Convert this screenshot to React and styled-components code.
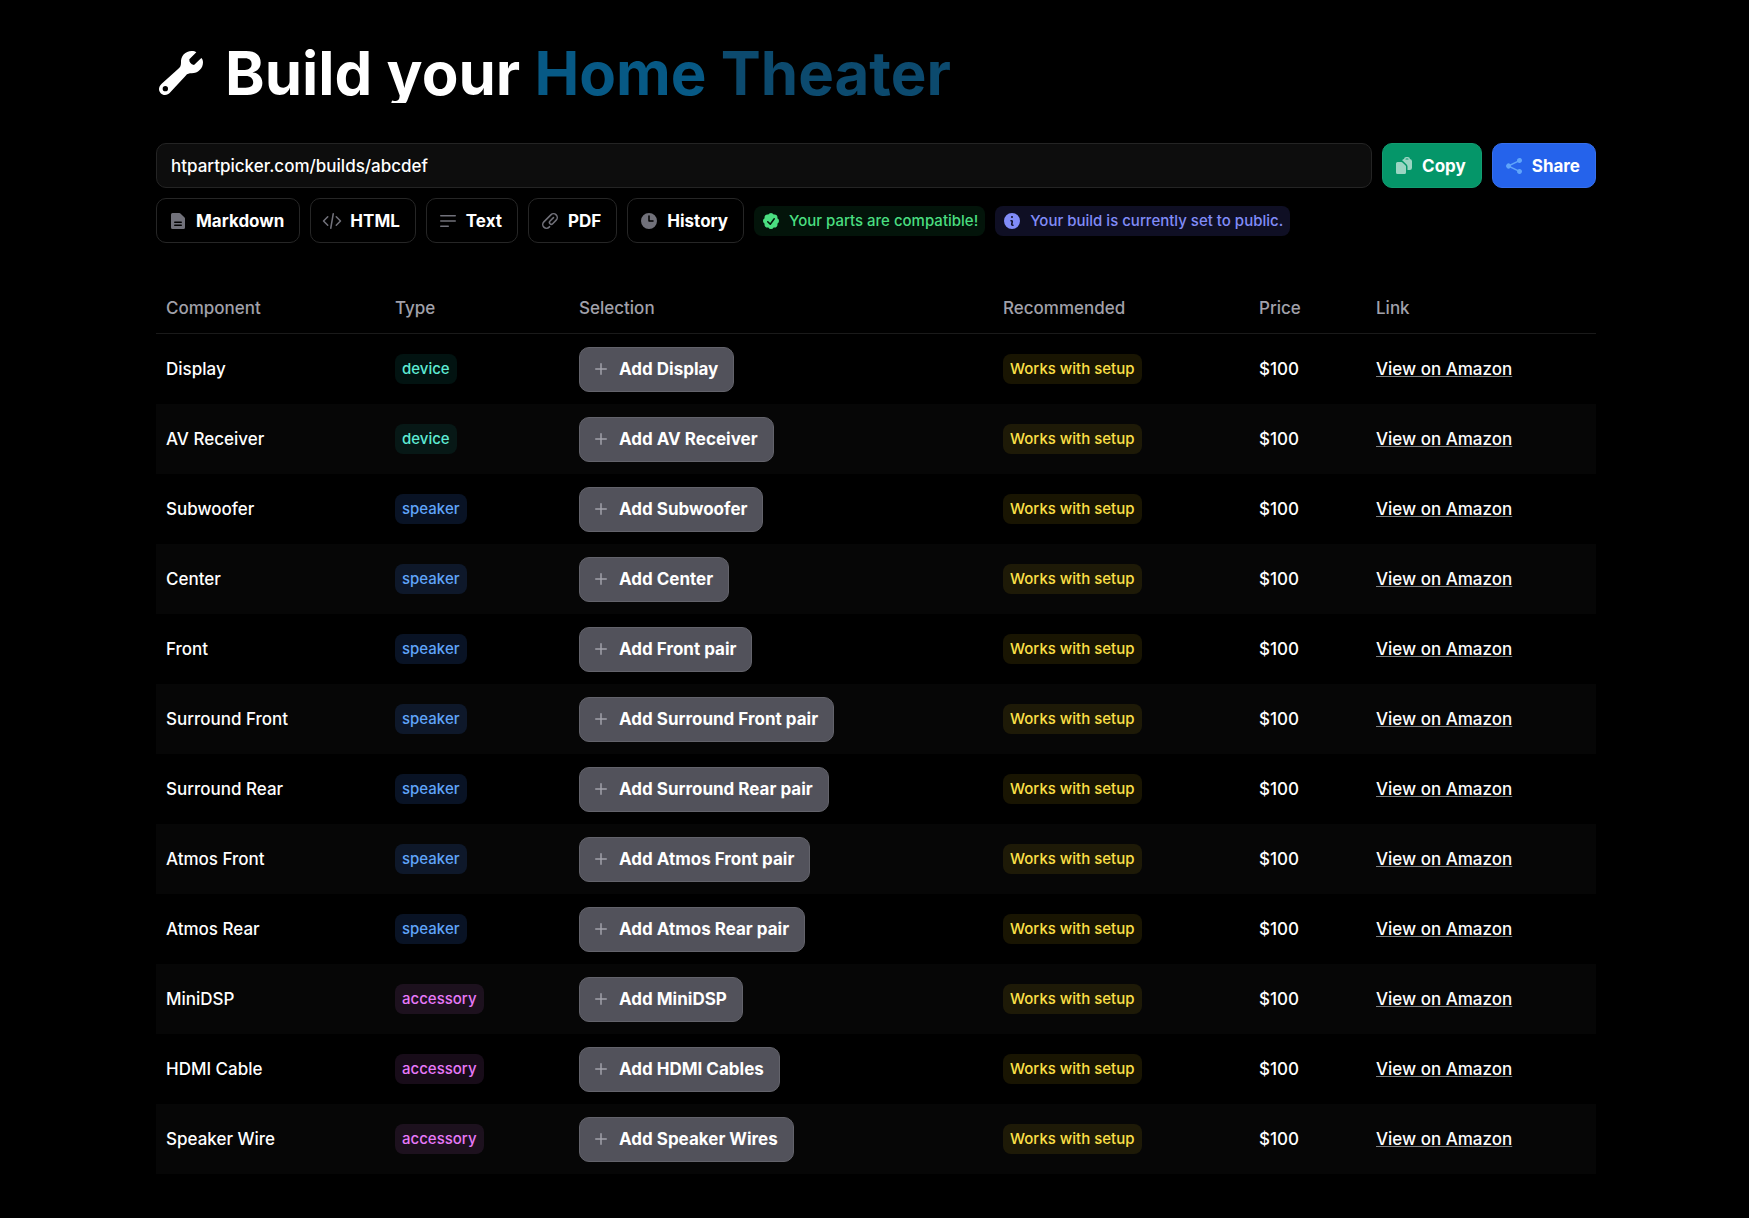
import React from "react";
import styled, { createGlobalStyle, css } from "styled-components";
import {
  HiMiniDocumentText,
  HiMiniCodeBracket,
  HiMiniBars3BottomLeft,
  HiMiniPaperClip,
  HiMiniClock,
  HiMiniCheckBadge,
  HiMiniInformationCircle,
  HiMiniClipboardDocument,
  HiMiniShare,
  HiMiniPlus,
} from "react-icons/hi2";

const GlobalStyle = createGlobalStyle`
  *, *::before, *::after { box-sizing: border-box; }
  body {
    margin: 0;
    background: #000;
    color: #fff;
    font-family: Inter, "Liberation Sans", sans-serif;
    font-size: 17px;
    font-weight: 500;
    line-height: 30px;
  }
  button, input { font: inherit; color: inherit; }
`;

const Page = styled.main`
  display: flex;
  justify-content: center;
  min-height: 100vh;
  padding: 43px 24px 44px 27px;
`;

const Content = styled.div`
  width: 100%;
  max-width: 1440px;
  display: flex;
  flex-direction: column;
  gap: 40px;
`;

const Title = styled.h1`
  display: flex;
  align-items: center;
  gap: 19px;
  margin: 0;
  font-size: 60px;
  line-height: 60px;
  font-weight: 700;

  svg { width: 50px; height: 44px; flex: none; }
`;

const Phrase = styled.span`
  display: inline-block;
  background: ${(p) => p.$color};
  background-clip: text;
  -webkit-background-clip: text;
  color: transparent;
`;

const Toolbar = styled.section`
  display: flex;
  flex-direction: column;
  gap: 10px;
`;

const ToolRow = styled.div`
  display: flex;
  flex-wrap: ${(p) => (p.$wrap ? "wrap" : "nowrap")};
  align-items: center;
  gap: 10px;
`;

const UrlInput = styled.input`
  flex: 1;
  min-width: 0;
  height: 45px;
  padding: 0 14px;
  background: #0d0d0d;
  border: 1px solid #242424;
  border-radius: 10px;
  outline: none;
`;

const tones = {
  outline: css`background: transparent; border-color: #262626; --icon: #71717a;`,
  zinc: css`background: #52525b; border-color: #63636b; --icon: #a1a1aa;`,
  green: css`background: #059669; border-color: #129c71; --icon: #9bd5c3;`,
  blue: css`background: #2563eb; border-color: #366fed; --icon: #60a5fa;`,
};

const Button = styled.button`
  display: inline-flex;
  align-items: center;
  gap: 8px;
  height: 45px;
  padding: 0 15px 0 11px;
  border: 1px solid;
  border-radius: 10px;
  font-weight: 700;
  white-space: nowrap;
  cursor: pointer;
  ${(p) => tones[p.$tone]}

  svg { width: 20px; height: 20px; flex: none; color: var(--icon); }
`;

const badgeTones = {
  device: css`color: #5eead4; background: rgba(20, 184, 166, 0.1);`,
  speaker: css`color: #60a5fa; background: rgba(59, 130, 246, 0.15);`,
  accessory: css`color: #e879f9; background: rgba(232, 121, 249, 0.1);`,
  works: css`color: #fde047; background: rgba(250, 204, 21, 0.1);`,
  green: css`color: #4ade80; background: rgba(34, 197, 94, 0.1);`,
  indigo: css`color: #818cf8; background: rgba(99, 102, 241, 0.15);`,
};

const Badge = styled.span`
  display: inline-flex;
  align-items: center;
  gap: 8px;
  height: 30px;
  padding: 0 7px;
  border-radius: 8px;
  font-size: 15px;
  font-weight: 500;
  white-space: nowrap;
  vertical-align: top;
  ${(p) => badgeTones[p.$tone]}

  svg { width: 20px; height: 20px; }
`;

const Table = styled.table`
  width: 100%;
  table-layout: fixed;
  border-collapse: separate;
  border-spacing: 0;
  text-align: left;
`;

const HeadCell = styled.th`
  height: 51px;
  padding: 0 10px;
  border-bottom: 1px solid #1a1a1a;
  color: #a1a1aa;
  font-weight: 500;
`;

const Row = styled.tr`
  &:nth-child(even) { background: #060606; }
`;

const Cell = styled.td`
  height: 70px;
  padding: 0 10px;
  vertical-align: middle;
  white-space: nowrap;
`;

const StoreLink = styled.a`
  color: #fff;
  text-decoration: underline;
  text-decoration-color: rgba(255, 255, 255, 0.5);
`;

function WrenchIcon() {
  return (
    <svg viewBox="-9 0 150 132" fill="currentColor" aria-hidden="true">
      <path
        fillRule="evenodd"
        d="M98 0 C104 0 109 1 112 4 L91 25 C90 33 95 40 105 42 L127 21 C130 23 132 28 132 34 C132 53 117 67 98 67 C91 67 85 68 80 74 L34 124 C29 130 24 132 18 132 C8 132 0 124 0 114 C0 108 3 103 8 98 L58 53 C64 48 66 43 66 35 C65 15 79 0 98 0 Z M19 105 a8 8 0 1 0 0 16 a8 8 0 1 0 0 -16 Z"
      />
    </svg>
  );
}

const columns = [
  ["Component", 229],
  ["Type", 184],
  ["Selection", 424],
  ["Recommended", 256],
  ["Price", 117],
  ["Link", 230],
];

const parts = [
  ["Display", "device", "Add Display"],
  ["AV Receiver", "device", "Add AV Receiver"],
  ["Subwoofer", "speaker", "Add Subwoofer"],
  ["Center", "speaker", "Add Center"],
  ["Front", "speaker", "Add Front pair"],
  ["Surround Front", "speaker", "Add Surround Front pair"],
  ["Surround Rear", "speaker", "Add Surround Rear pair"],
  ["Atmos Front", "speaker", "Add Atmos Front pair"],
  ["Atmos Rear", "speaker", "Add Atmos Rear pair"],
  ["MiniDSP", "accessory", "Add MiniDSP"],
  ["HDMI Cable", "accessory", "Add HDMI Cables"],
  ["Speaker Wire", "accessory", "Add Speaker Wires"],
];

const exportsList = [
  ["Markdown", HiMiniDocumentText],
  ["HTML", HiMiniCodeBracket],
  ["Text", HiMiniBars3BottomLeft],
  ["PDF", HiMiniPaperClip],
  ["History", HiMiniClock],
];

export default function App() {
  return (
    <>
      <GlobalStyle />
      <Page>
        <Content>
          <Title>
            <WrenchIcon />
            <span>
              <Phrase $color="#fff">Build your</Phrase>{" "}
              <Phrase $color="#075985">Home</Phrase>{" "}
              <Phrase $color="#0c4a6e">Theater</Phrase>
            </span>
          </Title>

          <Toolbar>
            <ToolRow>
              <UrlInput aria-label="Build link" readOnly value="htpartpicker.com/builds/abcdef" />
              <Button type="button" $tone="green"><HiMiniClipboardDocument />Copy</Button>
              <Button type="button" $tone="blue"><HiMiniShare />Share</Button>
            </ToolRow>
            <ToolRow $wrap>
              {exportsList.map(([label, Icon]) => (
                <Button key={label} type="button" $tone="outline"><Icon />{label}</Button>
              ))}
              <Badge $tone="green"><HiMiniCheckBadge />Your parts are compatible!</Badge>
              <Badge $tone="indigo"><HiMiniInformationCircle />Your build is currently set to public.</Badge>
            </ToolRow>
          </Toolbar>

          <Table>
            <colgroup>
              {columns.map(([name, width]) => <col key={name} width={width} />)}
            </colgroup>
            <thead>
              <tr>
                {columns.map(([name]) => <HeadCell key={name} scope="col">{name}</HeadCell>)}
              </tr>
            </thead>
            <tbody>
              {parts.map(([name, type, action]) => (
                <Row key={name}>
                  <Cell>{name}</Cell>
                  <Cell><Badge $tone={type}>{type}</Badge></Cell>
                  <Cell><Button type="button" $tone="zinc"><HiMiniPlus />{action}</Button></Cell>
                  <Cell><Badge $tone="works">Works with setup</Badge></Cell>
                  <Cell>$100</Cell>
                  <Cell><StoreLink href="#amazon">View on Amazon</StoreLink></Cell>
                </Row>
              ))}
            </tbody>
          </Table>
        </Content>
      </Page>
    </>
  );
}
